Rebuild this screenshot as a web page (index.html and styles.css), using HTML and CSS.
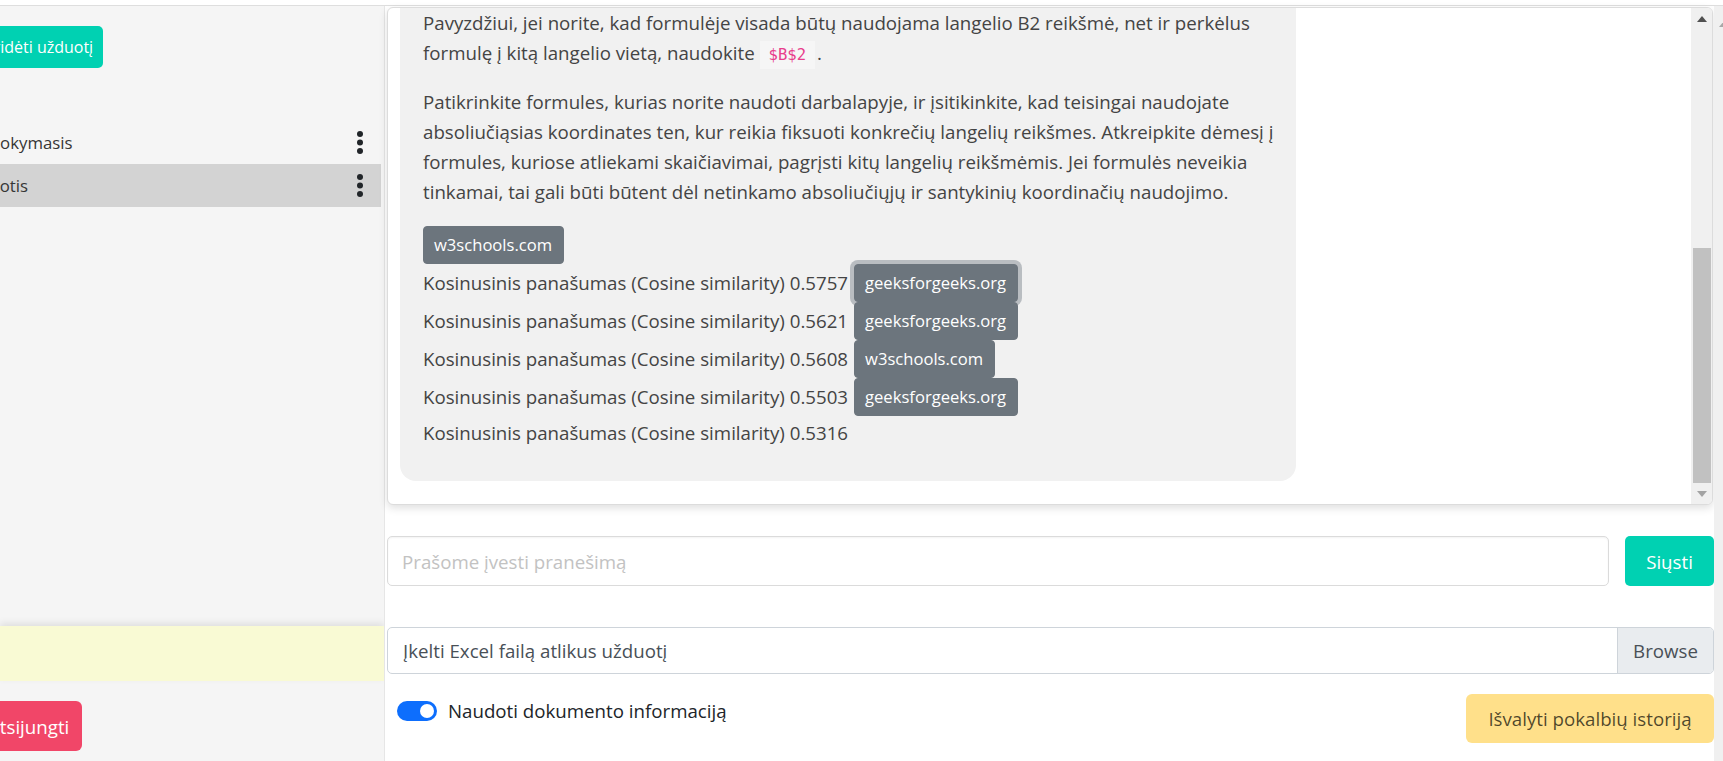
FILE: index.html
```html
<!DOCTYPE html>
<html lang="lt">
<head>
<meta charset="utf-8">
<title>Užduotys</title>
<link rel="stylesheet" href="styles.css">
</head>
<body>
<div class="topline"></div>
<div class="app">
  <aside class="sidebar">
    <div class="sb-top">
      <button class="btn-add">Pridėti užduotį</button>
    </div>
    <ul class="tasks">
      <li class="task">
        <span class="task-name">Mokymasis</span>
        <svg class="kebab" viewBox="0 0 6 23" width="6" height="23"><circle cx="3" cy="3" r="3"/><circle cx="3" cy="11.5" r="3"/><circle cx="3" cy="20" r="3"/></svg>
      </li>
      <li class="task active">
        <span class="task-name task-name-long">Užduotis</span>
        <svg class="kebab" viewBox="0 0 6 23" width="6" height="23"><circle cx="3" cy="3" r="3"/><circle cx="3" cy="11.5" r="3"/><circle cx="3" cy="20" r="3"/></svg>
      </li>
    </ul>
    <div class="sb-spacer"></div>
    <div class="notice"></div>
    <div class="sb-bottom">
      <button class="btn-logout">Atsijungti</button>
    </div>
  </aside>

  <main class="main">
    <section class="chat-card">
      <div class="chat-scroll">
        <div class="bubble">
          <p class="p-first">Pavyzdžiui, jei norite, kad formulėje visada būtų naudojama langelio B2 reikšmė, net ir perkėlus<br>formulę į kitą langelio vietą, naudokite <code>$B$2</code>.</p>
          <p>Patikrinkite formules, kurias norite naudoti darbalapyje, ir įsitikinkite, kad teisingai naudojate<br>absoliučiąsias koordinates ten, kur reikia fiksuoti konkrečių langelių reikšmes. Atkreipkite dėmesį į<br>formules, kuriose atliekami skaičiavimai, pagrįsti kitų langelių reikšmėmis. Jei formulės neveikia<br>tinkamai, tai gali būti būtent dėl netinkamo absoliučiųjų ir santykinių koordinačių naudojimo.</p>
          <div class="sources">
            <div class="src-row"><a class="src-btn">w3schools.com</a></div>
            <div class="src-row"><span>Kosinusinis panašumas (Cosine similarity) 0.5757</span><a class="src-btn focused">geeksforgeeks.org</a></div>
            <div class="src-row"><span>Kosinusinis panašumas (Cosine similarity) 0.5621</span><a class="src-btn">geeksforgeeks.org</a></div>
            <div class="src-row"><span>Kosinusinis panašumas (Cosine similarity) 0.5608</span><a class="src-btn">w3schools.com</a></div>
            <div class="src-row"><span>Kosinusinis panašumas (Cosine similarity) 0.5503</span><a class="src-btn">geeksforgeeks.org</a></div>
            <div class="src-row src-last"><span>Kosinusinis panašumas (Cosine similarity) 0.5316</span></div>
          </div>
        </div>
      </div>
      <div class="vscroll">
        <span class="arrow arrow-up"></span>
        <div class="track"><div class="thumb"></div></div>
        <span class="arrow arrow-down"></span>
      </div>
    </section>

    <div class="composer">
      <input class="msg-input" type="text" placeholder="Prašome įvesti pranešimą">
      <button class="btn-send">Siųsti</button>
    </div>

    <div class="file-input">
      <span class="file-label">Įkelti Excel failą atlikus užduotį</span>
      <span class="file-browse">Browse</span>
    </div>

    <div class="actions">
      <label class="switch-row">
        <span class="switch"></span>
        <span class="switch-label">Naudoti dokumento informaciją</span>
      </label>
      <button class="btn-clear">Išvalyti pokalbių istoriją</button>
    </div>
  </main>

  <div class="page-scroll"><span class="ps-arrow"></span></div>
</div>
</body>
</html>
```

FILE: styles.css
```css
* { box-sizing: border-box; }

html, body {
  margin: 0;
  padding: 0;
  width: 1723px;
  height: 761px;
  overflow: hidden;
  background: #fff;
  font-family: "Open Sans", "Noto Sans", sans-serif;
  color: #4a4a4a;
}

button {
  font-family: inherit;
  border: 0;
  cursor: pointer;
}

.topline {
  height: 6px;
  border-bottom: 1px solid #dedede;
  background: #fff;
}

.app {
  display: flex;
  height: 755px;
}

/* ---------- Sidebar ---------- */
.sidebar {
  width: 385px;
  flex: none;
  background: #f5f5f5;
  border-right: 1px solid #e6e6e6;
  display: flex;
  flex-direction: column;
  overflow: hidden;
}

.sb-top {
  padding-top: 20px;
  height: 62px;
}

.btn-add {
  height: 42px;
  padding: 0 10px;
  margin-left: -26px;
  background: #00d1b2;
  color: #fff;
  font-size: 16px;
  border-radius: 5px;
  white-space: nowrap;
}

.tasks {
  list-style: none;
  margin: 53px 3px 0 0;
  padding: 0;
}

.task {
  height: 43px;
  display: flex;
  align-items: center;
  justify-content: space-between;
  padding-right: 18px;
  font-size: 16.8px;
  color: #363636;
  overflow: hidden;
}

.task.active {
  background: #d3d3d3;
}

.task-name {
  margin-left: -15px;
  white-space: nowrap;
}

.task-name-long {
  margin-left: -41px;
}

.kebab {
  fill: #212529;
  flex: none;
}

.sb-spacer {
  flex: 1;
}

.notice {
  height: 55px;
  flex: none;
  background: #f9fad4;
  box-shadow: 0 -3px 7px rgba(0, 0, 0, 0.09);
}

.sb-bottom {
  padding: 20px 0 10px;
}

.btn-logout {
  height: 50px;
  padding: 0 13px;
  margin-left: -25px;
  background: #f14668;
  color: #fff;
  font-size: 18.7px;
  border-radius: 6px;
  white-space: nowrap;
}

/* ---------- Main ---------- */
.main {
  flex: 1;
  padding: 1px 0 0 2px;
  display: flex;
  flex-direction: column;
  min-width: 0;
}

.chat-card {
  height: 498px;
  margin-right: 1px;
  border: 1px solid #dcdcdc;
  border-radius: 6px;
  box-shadow: 0 3px 8px rgba(0, 0, 0, 0.13);
  display: flex;
  overflow: hidden;
  background: #fff;
}

.chat-scroll {
  flex: 1;
  overflow: hidden;
  padding: 0 0 25px 12px;
}

.bubble {
  width: 896px;
  background: #f1f1f1;
  border-radius: 0 0 16px 16px;
  padding: 0 23px 31px;
  font-size: 18.7px;
  line-height: 30px;
  color: #444;
}

.bubble p {
  margin: 0 0 19px;
  white-space: nowrap;
}

.bubble .p-first {
  margin-bottom: 17px;
}

.bubble code {
  font-family: "DejaVu Sans Mono", "Liberation Mono", monospace;
  font-size: 15.6px;
  color: #e83e8c;
  background: #f6f6f6;
  padding: 5px 9px;
  margin-right: 2px;
}

.sources {
  display: flex;
  flex-direction: column;
}

.src-row {
  height: 38px;
  display: flex;
  align-items: center;
  white-space: nowrap;
}

.src-last {
  height: 34px;
}

.src-btn {
  display: inline-block;
  height: 38px;
  line-height: 36px;
  padding: 0 11px 0 10px;
  border: 1px solid #6c757d;
  background: #6c757d;
  color: #fff;
  font-size: 16.6px;
  border-radius: 4px;
  white-space: nowrap;
}

.src-row span + .src-btn {
  margin-left: 6px;
}

.src-btn.focused {
  box-shadow: 0 0 0 4px rgba(130, 138, 145, 0.5);
}

.vscroll {
  width: 21px;
  flex: none;
  background: #f0f0f0;
  display: flex;
  flex-direction: column;
  align-items: center;
}

.arrow {
  height: 21px;
  width: 100%;
  display: flex;
  align-items: center;
  justify-content: center;
  flex: none;
}

.arrow::before {
  content: "";
  width: 0;
  height: 0;
  border-left: 5px solid transparent;
  border-right: 5px solid transparent;
}

.arrow-up::before {
  border-bottom: 6px solid #505050;
}

.arrow-down::before {
  border-top: 6px solid #a3a3a3;
}

.track {
  flex: 1;
  width: 100%;
  display: flex;
  flex-direction: column;
  justify-content: flex-end;
  padding: 0 1px 0 2px;
}

.thumb {
  height: 235px;
  background: #c1c1c1;
}

.composer {
  display: flex;
  gap: 16px;
  margin-top: 31px;
  height: 50px;
}

.msg-input {
  flex: 1;
  height: 50px;
  border: 1px solid #dbdbdb;
  border-radius: 5px;
  box-shadow: inset 0 1px 2px rgba(10, 10, 10, 0.05);
  padding: 0 14px;
  font-family: inherit;
  font-size: 18.7px;
  color: #363636;
  outline: none;
}

.msg-input::placeholder {
  color: #c2c2c2;
}

.btn-send {
  width: 89px;
  height: 50px;
  background: #00d1b2;
  color: #fff;
  font-size: 18.7px;
  border-radius: 5px;
}

.file-input {
  margin-top: 41px;
  height: 47px;
  display: flex;
  border: 1px solid #ced4da;
  border-radius: 5px;
  overflow: hidden;
  font-size: 18.7px;
  color: #495057;
}

.file-label {
  flex: 1;
  display: flex;
  align-items: center;
  padding-left: 15px;
}

.file-browse {
  width: 96px;
  flex: none;
  display: flex;
  align-items: center;
  justify-content: center;
  background: #e9ecef;
  border-left: 1px solid #ced4da;
}

.actions {
  margin-top: 20px;
  display: flex;
  justify-content: space-between;
  align-items: flex-start;
}

.switch-row {
  display: flex;
  align-items: center;
  margin: 4px 0 0 10px;
  gap: 11px;
}

.switch {
  width: 40px;
  height: 20px;
  border-radius: 10px;
  background: #0d6efd;
  display: flex;
  align-items: center;
  justify-content: flex-end;
  padding-right: 3px;
}

.switch::after {
  content: "";
  width: 14px;
  height: 14px;
  border-radius: 50%;
  background: #fff;
}

.switch-label {
  font-size: 18.7px;
  color: #212529;
}

.btn-clear {
  width: 248px;
  height: 49px;
  background: #ffe08a;
  color: rgba(0, 0, 0, 0.7);
  font-size: 18.7px;
  border-radius: 6px;
}

.page-scroll {
  width: 9px;
  flex: none;
  background: #f0f0f0;
  position: relative;
}

.ps-arrow {
  position: absolute;
  top: 15px;
  left: 5px;
  width: 0;
  height: 0;
  border-left: 5px solid transparent;
  border-right: 5px solid transparent;
  border-bottom: 6px solid #a8a8a8;
}
```
